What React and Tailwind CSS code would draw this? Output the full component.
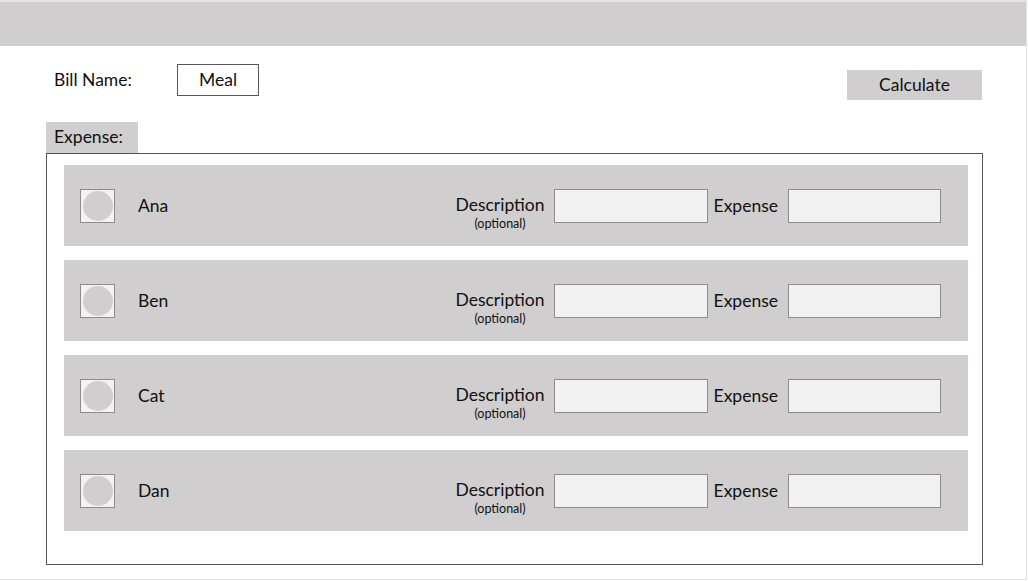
import React from "react";

const people = ["Ana", "Ben", "Cat", "Dan"];

function Row({ name }) {
  return (
    <div className="flex h-[81px] items-center bg-[#d0cecf] pl-4">
      <div className="flex h-[34px] w-[35px] items-center justify-center border border-[#8c8c8c] bg-[#f2f2f2]">
        <div className="h-[30px] w-[30px] rounded-full bg-[#d0cecf]" />
      </div>
      <div className="ml-[23px] text-[17.5px] leading-[18px] text-[#111]">{name}</div>
      <div className="ml-auto flex h-full items-center">
        <div className="flex h-full flex-col items-center pt-[31px]">
          <span className="text-[17.5px] leading-[18px] text-[#111]">Description</span>
          <span className="mt-[3px] text-[12.5px] leading-[13px] text-[#111]">(optional)</span>
        </div>
        <div className="ml-[9px] h-[34px] w-[154px] border border-[#8c8c8c] bg-[#f2f2f2]" />
        <span className="ml-[6px] text-[17.5px] leading-[18px] text-[#111]">Expense</span>
        <div className="ml-[10px] h-[34px] w-[153px] border border-[#8c8c8c] bg-[#f2f2f2]" />
        <div className="w-[27px]" />
      </div>
    </div>
  );
}

export default function App() {
  return (
    <div
      className="h-[581px] w-[1028px] bg-white"
      style={{ fontFamily: "Lato, 'Liberation Sans', sans-serif" }}
    >
      <div className="h-[580px] w-[1027px] border-r border-b border-t-2 border-[#e3e3e3]">
        <div className="h-[44px] bg-[#d0cecf]" />
        <div className="flex items-start pl-[54px] pt-[18px]">
          <div className="flex h-[32px] w-[123px] items-center text-[17.5px] text-[#111]">
            Bill Name:
          </div>
          <div className="flex h-[32px] w-[82px] items-center justify-center border border-[#555] text-[17.5px] text-[#111]">
            Meal
          </div>
          <div className="ml-auto mr-[44px] mt-[6px] flex h-[30px] w-[135px] items-center justify-center bg-[#d0cecf] text-[17.5px] text-[#111]">
            Calculate
          </div>
        </div>
        <div className="pl-[46px] pt-[22px]">
          <div className="flex h-[31px] w-[92px] items-center bg-[#d0cecf] pl-[8px] text-[17.5px] text-[#111]">
            Expense:
          </div>
          <div className="flex h-[412px] w-[937px] flex-col gap-[14px] border border-[#555] pl-[17px] pr-[14px] pt-[11px]">
            {people.map((p) => (
              <Row key={p} name={p} />
            ))}
          </div>
        </div>
      </div>
    </div>
  );
}
